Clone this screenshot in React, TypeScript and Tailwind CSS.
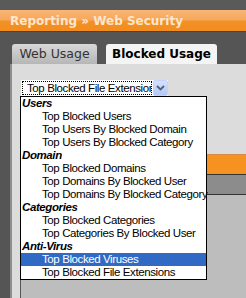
// Reporting screen with the "Blocked Usage" tab open and its report picker dropped down.

const groups: { label: string; items: string[] }[] = [
  { label: 'Users', items: ['Top Blocked Users', 'Top Users By Blocked Domain', 'Top Users By Blocked Category'] },
  { label: 'Domain', items: ['Top Blocked Domains', 'Top Domains By Blocked User', 'Top Domains By Blocked Category'] },
  { label: 'Categories', items: ['Top Blocked Categories', 'Top Categories By Blocked User'] },
  { label: 'Anti-Virus', items: ['Top Blocked Viruses', 'Top Blocked File Extensions'] },
]

const selected = 'Top Blocked Viruses'

function ReportList() {
  return (
    <ul className="absolute left-[20px] top-[96px] w-[187px] border border-black bg-white font-['Liberation_Sans',Arial,sans-serif] text-[11.5px] leading-[13px] tracking-[-0.4px] text-black">
      {groups.map((g) => (
        <li key={g.label}>
          <div className="h-[13px] pl-[1px] font-bold italic">{g.label}</div>
          {g.items.map((item) => (
            <div
              key={item}
              className={
                item === selected
                  ? 'h-[13px] pl-[21px] bg-[#316ac5] text-white whitespace-nowrap'
                  : 'h-[13px] pl-[21px] whitespace-nowrap'
              }
            >
              {item}
            </div>
          ))}
        </li>
      ))}
    </ul>
  )
}

export default function App() {
  return (
    <div className="relative w-[246px] h-[298px] overflow-hidden bg-[#555555] font-['DejaVu_Sans',Verdana,sans-serif]">
      <div className="h-[10px] bg-[#5a5a5a]" />
      <div className="h-[21px] bg-[linear-gradient(#f8b677_0%,#f6a85c_45%,#f39125_55%,#f28c1f_100%)] pl-[10px] flex items-center">
        <span className="text-[12px] font-bold text-[#fde6cf]">Reporting » Web Security</span>
      </div>
      <div className="h-[1px] bg-[#444444]" />

      <div className="flex items-end gap-[9px] pl-[12px] pt-[11px] h-[32px]">
        <div className="w-[85px] h-[20px] rounded-t-[3px] bg-[linear-gradient(#d8d8d8,#b6b6b6)] text-[12.5px] text-[#333] flex items-center justify-center">
          Web Usage
        </div>
        <div className="w-[111px] h-[20px] rounded-t-[3px] bg-[#f4f4f4] text-[12px] font-bold text-black flex items-center justify-center">
          Blocked Usage
        </div>
      </div>

      <div className="ml-[10px] h-[235px] border-l-2 border-[#8e8e8e] bg-[#dcdcdc] pt-[16px]">
        <div className="ml-[9px] w-[147px] h-[16px] bg-white flex items-stretch font-['Liberation_Sans',Arial,sans-serif] text-[11.5px] tracking-[-0.4px]">
          <div className="flex-1 min-w-0 m-[1px] border border-dotted border-black pl-[4px] leading-[12px] overflow-hidden whitespace-nowrap text-clip">
            Top Blocked File Extensions
          </div>
          <div className="w-[15px] rounded-[2px] bg-[linear-gradient(#d6e2fb,#b4c8f4)] border border-[#c3d3fd] flex items-center justify-center">
            <svg width="9" height="6" viewBox="0 0 9 6">
              <path d="M1 1 L4.5 4.5 L8 1" fill="none" stroke="#4d6185" strokeWidth="1.8" />
            </svg>
          </div>
        </div>

        <div className="mt-[58px] ml-[8px] h-[200px] border-l border-[#555] flex flex-col">
          <div className="h-[20px] bg-[#f6921f] border-t border-[#d9884a]" />
          <div className="h-[20px] bg-[#8c8c8c] border-t border-[#333]" />
          <div className="flex-1 bg-[#bdbdbd] border-t border-[#333]" />
        </div>
      </div>

      <ReportList />
    </div>
  )
}
